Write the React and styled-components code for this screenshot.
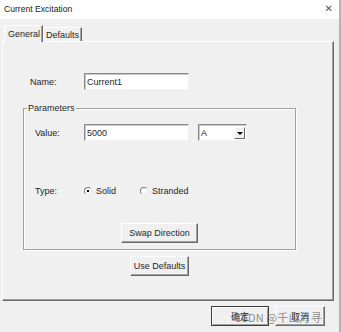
import styled, { createGlobalStyle } from "styled-components";

const GlobalStyle = createGlobalStyle`
    html, body {
        margin: 0;
        padding: 0;
        background: #f0f0f0;
    }
    * {
        box-sizing: border-box;
    }
`;

export default function App() {
    return (
        <>
            <GlobalStyle />
            <Window>
                <TitleBar>
                    <Title>Current Excitation</Title>
                    <CloseButton>✕</CloseButton>
                </TitleBar>

                <Body>
                    <TabStrip>
                        <Tab active>General</Tab>
                        <Tab>Defaults</Tab>
                    </TabStrip>

                    <TabPanel>
                        <Column>
                            <NameRow>
                                <Label width={54}>Name:</Label>
                                <TextBox defaultValue="Current1" />
                            </NameRow>

                            <Group>
                                <Legend>Parameters</Legend>
                                <FieldRow>
                                    <Label width={49}>Value:</Label>
                                    <TextBox defaultValue="5000" />
                                    <Combo>
                                        <ComboText>A</ComboText>
                                        <ComboArrow />
                                    </Combo>
                                </FieldRow>

                                <FieldRow spaced>
                                    <Label width={49}>Type:</Label>
                                    <RadioOption width={56}>
                                        <Radio checked />
                                        Solid
                                    </RadioOption>
                                    <RadioOption>
                                        <Radio />
                                        Stranded
                                    </RadioOption>
                                </FieldRow>

                                <Centered>
                                    <Button width={77}>Swap Direction</Button>
                                </Centered>
                            </Group>

                            <Centered>
                                <Button width={59}>Use Defaults</Button>
                            </Centered>
                        </Column>
                    </TabPanel>

                    <Footer>
                        <Button width={58} primary>确定</Button>
                        <Button width={50}>取消</Button>
                        <Watermark>CSDN @千山月寻</Watermark>
                    </Footer>
                </Body>
            </Window>
        </>
    );
}

const Window = styled.div`
    width: 341px;
    height: 332px;
    display: flex;
    flex-direction: column;
    font-family: "Liberation Sans", Arial, sans-serif;
    font-size: 9px;
    color: #1e1e1e;
    border-right: 2px solid #b4b4b4;
    background: #f0f0f0;
`;

const TitleBar = styled.div`
    height: 19px;
    display: flex;
    align-items: center;
    justify-content: space-between;
    background: #ffffff;
    padding: 0 6px 2px 4px;
`;

const Title = styled.span`
    font-size: 8.6px;
    color: #1a1a1a;
`;

const CloseButton = styled.span`
    font-size: 10px;
    color: #555;
    font-family: "DejaVu Sans", sans-serif;
`;

const Body = styled.div`
    flex: 1;
    display: flex;
    flex-direction: column;
    padding: 5px 0 0 2px;
`;

const TabStrip = styled.div`
    display: flex;
    align-items: flex-end;
    height: 17px;
    padding-left: 2px;
`;

const Tab = styled.div`
    height: ${(p) => (p.active ? "17px" : "14px")};
    padding: ${(p) => (p.active ? "0 2px 0 3px" : "0 2px 0 2px")};
    display: flex;
    align-items: center;
    background: #f0f0f0;
    border-top: 1px solid #ffffff;
    border-left: 1px solid #ffffff;
    border-right: 1px solid #696969;
    box-shadow: inset -1px 0 0 #a0a0a0;
    margin-bottom: ${(p) => (p.active ? "-1px" : "0")};
    position: relative;
    z-index: ${(p) => (p.active ? 1 : 0)};
`;

const TabPanel = styled.div`
    width: 332px;
    height: 260px;
    border-top: 1px solid #ffffff;
    border-left: 1px solid #ffffff;
    border-right: 1px solid #696969;
    border-bottom: 1px solid #696969;
    box-shadow: inset -1px -1px 0 #a0a0a0;
    padding: 31px 0 0 20px;
`;

const Column = styled.div`
    width: 273px;
    display: flex;
    flex-direction: column;
`;

const NameRow = styled.div`
    display: flex;
    align-items: center;
    height: 17px;
    padding-left: 7px;
`;

const Label = styled.span`
    width: ${(p) => p.width}px;
    flex-shrink: 0;
`;

const TextBox = styled.input`
    width: 105px;
    height: 17px;
    font-family: inherit;
    font-size: 9px;
    color: #1e1e1e;
    padding: 0 2px;
    background: #ffffff;
    border: 1px solid;
    border-color: #8a8a8a #f0f0f0 #f0f0f0 #8a8a8a;
    box-shadow: inset 1px 1px 0 #c8c8c8;
    outline: none;
`;

const Group = styled.fieldset`
    margin: 13px 0 0 0;
    padding: 10px 0 5px 0;
    min-width: 0;
    height: 147px;
    border: 1px solid #a0a0a0;
    box-shadow: 1px 1px 0 #ffffff, inset 1px 1px 0 #ffffff;
    display: flex;
    flex-direction: column;
`;

const Legend = styled.legend`
    padding: 0 1px;
    margin-left: 3px;
    line-height: 11px;
`;

const FieldRow = styled.div`
    display: flex;
    align-items: center;
    height: 17px;
    padding-left: 11px;
    margin-top: ${(p) => (p.spaced ? "41px" : "0")};
`;

const Combo = styled.div`
    width: 49px;
    height: 17px;
    margin-left: 9px;
    display: flex;
    align-items: stretch;
    background: #ffffff;
    border: 1px solid;
    border-color: #8a8a8a #f0f0f0 #f0f0f0 #8a8a8a;
    box-shadow: inset 1px 1px 0 #c8c8c8;
    padding: 2px 1px 1px 2px;
`;

const ComboText = styled.span`
    flex: 1;
    line-height: 12px;
`;

const ComboArrow = styled.span`
    width: 11px;
    background: #f0f0f0;
    border: 1px solid;
    border-color: #ffffff #696969 #696969 #ffffff;
    display: flex;
    align-items: center;
    justify-content: center;
    &::after {
        content: "";
        border-left: 3px solid transparent;
        border-right: 3px solid transparent;
        border-top: 3px solid #000;
    }
`;

const RadioOption = styled.label`
    display: flex;
    align-items: center;
    gap: 4px;
    width: ${(p) => (p.width ? `${p.width}px` : "auto")};
`;

const Radio = styled.span`
    width: 8px;
    height: 8px;
    border-radius: 50%;
    border: 1px solid;
    border-color: #7a7a7a #e8e8e8 #e8e8e8 #7a7a7a;
    background: #ffffff;
    display: flex;
    align-items: center;
    justify-content: center;
    &::after {
        content: "";
        width: 2px;
        height: 2px;
        background: ${(p) => (p.checked ? "#000" : "transparent")};
    }
`;

const Centered = styled.div`
    display: flex;
    justify-content: center;
    margin-top: 6px;

    ${Group} & {
        margin-top: 24px;
    }
`;

const Button = styled.button`
    width: ${(p) => p.width}px;
    height: 20px;
    padding: 0;
    font-family: "Liberation Sans", "Noto Sans CJK SC", sans-serif;
    font-size: 9px;
    color: #1e1e1e;
    background: #f0f0f0;
    border: 1px solid;
    border-color: ${(p) => (p.primary ? "#3c3c3c" : "#ffffff #696969 #696969 #ffffff")};
    box-shadow: ${(p) =>
        p.primary
            ? "inset 1px 1px 0 #ffffff, inset -1px -1px 0 #a0a0a0"
            : "inset -1px -1px 0 #a0a0a0"};
`;

const Footer = styled.div`
    display: flex;
    justify-content: flex-end;
    gap: 6px;
    margin-top: 5px;
    padding-right: 14px;
    position: relative;
`;

const Watermark = styled.span`
    position: absolute;
    right: 17px;
    top: 3px;
    font-family: "Noto Sans CJK SC", sans-serif;
    font-size: 11px;
    color: rgba(110, 110, 110, 0.8);
    pointer-events: none;
    letter-spacing: 0.2px;
`;
